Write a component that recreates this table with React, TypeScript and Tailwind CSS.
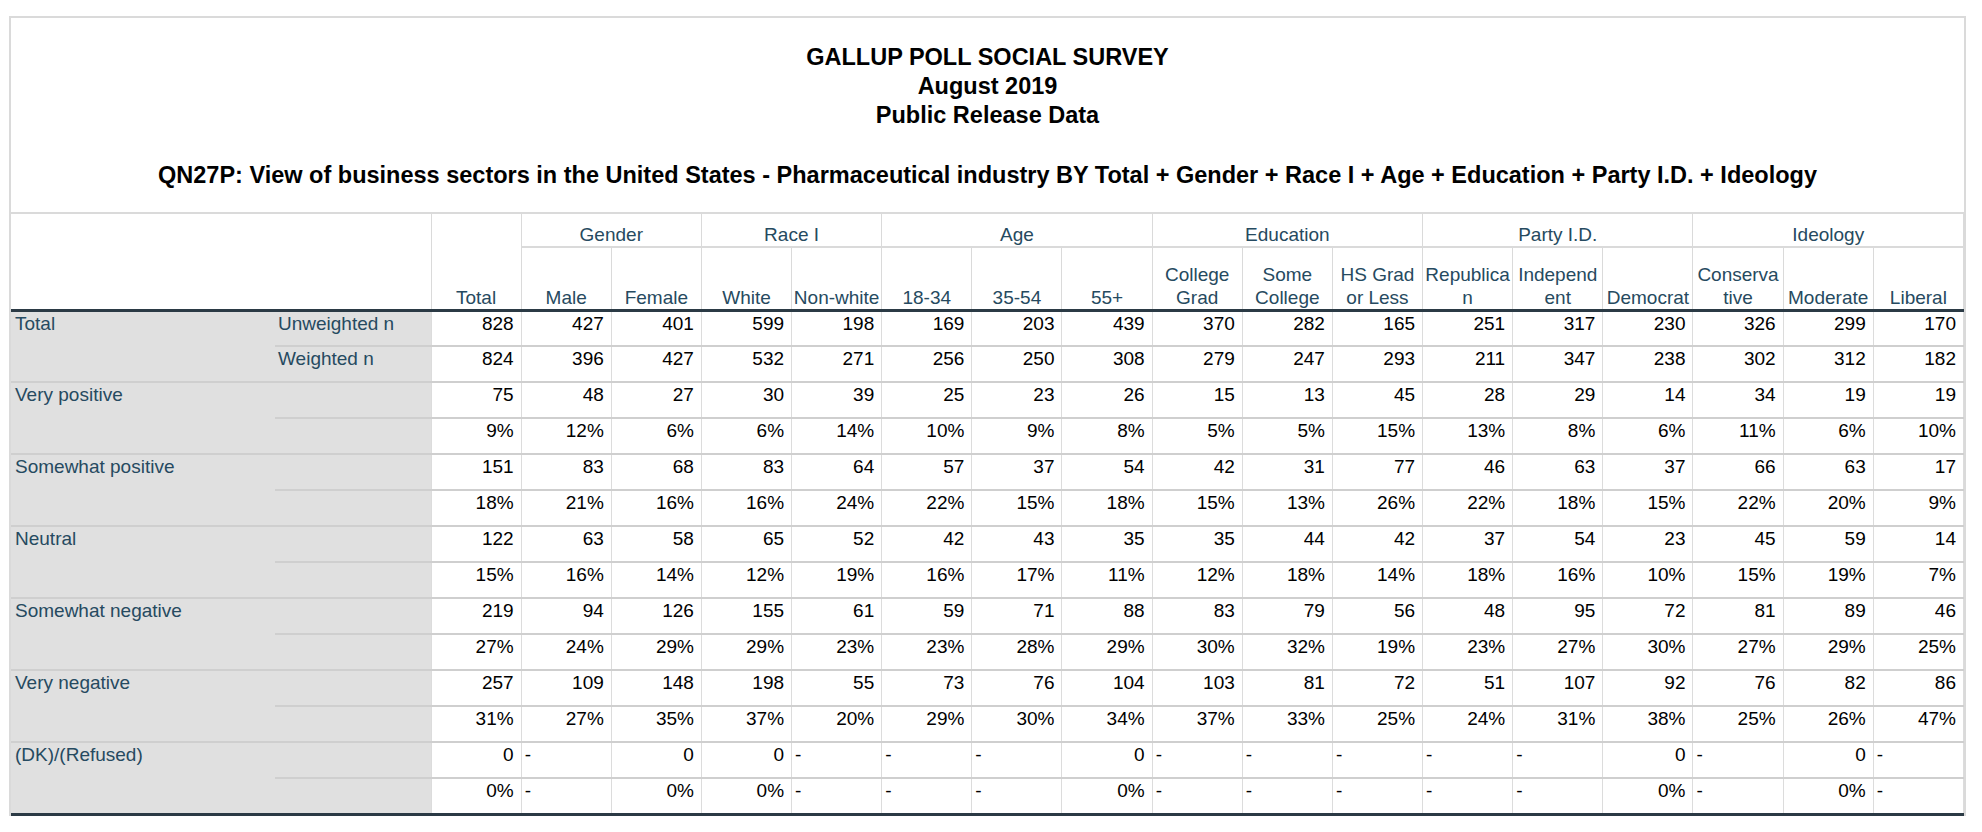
import React from 'react';

const groups = [
  { name: 'Gender', cols: ['Male', 'Female'] },
  { name: 'Race I', cols: ['White', 'Non-white'] },
  { name: 'Age', cols: ['18-34', '35-54', '55+'] },
  { name: 'Education', cols: ['College\nGrad', 'Some\nCollege', 'HS Grad\nor Less'] },
  { name: 'Party I.D.', cols: ['Republica\nn', 'Independ\nent', 'Democrat'] },
  { name: 'Ideology', cols: ['Conserva\ntive', 'Moderate', 'Liberal'] },
];

const rows = [
  {
    label: 'Total',
    sub: ['Unweighted n', 'Weighted n'],
    data: [
      '828 427 401 599 198 169 203 439 370 282 165 251 317 230 326 299 170',
      '824 396 427 532 271 256 250 308 279 247 293 211 347 238 302 312 182',
    ],
  },
  {
    label: 'Very positive',
    sub: ['', ''],
    data: [
      '75 48 27 30 39 25 23 26 15 13 45 28 29 14 34 19 19',
      '9% 12% 6% 6% 14% 10% 9% 8% 5% 5% 15% 13% 8% 6% 11% 6% 10%',
    ],
  },
  {
    label: 'Somewhat positive',
    sub: ['', ''],
    data: [
      '151 83 68 83 64 57 37 54 42 31 77 46 63 37 66 63 17',
      '18% 21% 16% 16% 24% 22% 15% 18% 15% 13% 26% 22% 18% 15% 22% 20% 9%',
    ],
  },
  {
    label: 'Neutral',
    sub: ['', ''],
    data: [
      '122 63 58 65 52 42 43 35 35 44 42 37 54 23 45 59 14',
      '15% 16% 14% 12% 19% 16% 17% 11% 12% 18% 14% 18% 16% 10% 15% 19% 7%',
    ],
  },
  {
    label: 'Somewhat negative',
    sub: ['', ''],
    data: [
      '219 94 126 155 61 59 71 88 83 79 56 48 95 72 81 89 46',
      '27% 24% 29% 29% 23% 23% 28% 29% 30% 32% 19% 23% 27% 30% 27% 29% 25%',
    ],
  },
  {
    label: 'Very negative',
    sub: ['', ''],
    data: [
      '257 109 148 198 55 73 76 104 103 81 72 51 107 92 76 82 86',
      '31% 27% 35% 37% 20% 29% 30% 34% 37% 33% 25% 24% 31% 38% 25% 26% 47%',
    ],
  },
  {
    label: '(DK)/(Refused)',
    sub: ['', ''],
    data: [
      '0 - 0 0 - - - 0 - - - - - 0 - 0 -',
      '0% - 0% 0% - - - 0% - - - - - 0% - 0% -',
    ],
  },
];

const Cell = ({ v }: { v: string }) => (
  <td
    className={`h-[36px] align-top pt-[1px] border-x border-[#dcdcdc] border-t-2 border-t-[#cfcfcf] ${
      v === '-' ? 'text-left pl-[3px]' : 'text-right pr-[7px]'
    }`}
  >
    {v}
  </td>
);

const App = () => {
  return (
    <div className="min-h-screen bg-white pt-[16px] pl-[9px] font-['Liberation_Sans',Arial,sans-serif]">
      <div className="w-[1957px] border-2 border-b-0 border-[#dadada]">
        {/* Title block */}
        <div className="text-center text-[23.5px] font-bold leading-[29px] text-black pt-[25px] pb-[22px]">
          <div>GALLUP POLL SOCIAL SURVEY</div>
          <div>August 2019</div>
          <div>Public Release Data</div>
          <div className="mt-[31px]">
            QN27P: View of business sectors in the United States - Pharmaceutical industry BY Total + Gender + Race I + Age + Education + Party I.D. + Ideology
          </div>
        </div>

        <table className="w-full table-fixed border-collapse text-[19px] leading-[22px]">
          <colgroup>
            <col className="w-[264px]" />
            <col className="w-[156px]" />
          </colgroup>
          <thead className="text-[#264a60]">
            <tr className="h-[34px]">
              <th colSpan={2} rowSpan={2} className="border-t-2 border-[#dadada] border-b-[3px] border-b-[#2b3a45]" />
              <th
                rowSpan={2}
                className="font-normal align-bottom pb-0 border-t-2 border-x border-[#dadada] border-b-[3px] border-b-[#2b3a45]"
              >
                Total
              </th>
              {groups.map((g) => (
                <th
                  key={g.name}
                  colSpan={g.cols.length}
                  className="font-normal align-bottom pb-0 border-t-2 border-b-2 border-x border-[#dadada]"
                >
                  {g.name}
                </th>
              ))}
            </tr>
            <tr className="h-[63px]">
              {groups.flatMap((g) =>
                g.cols.map((c) => (
                  <th
                    key={c}
                    className="font-normal align-bottom pb-0 whitespace-pre-line leading-[23px] border-x border-[#dadada] border-b-[3px] border-b-[#2b3a45]"
                  >
                    {c}
                  </th>
                ))
              )}
            </tr>
          </thead>
          <tbody className="text-black">
            {rows.map((r) =>
              r.data.map((line, i) => (
                <tr key={r.label + i}>
                  {i === 0 && (
                    <td
                      rowSpan={2}
                      className="align-top pt-[1px] pl-[4px] bg-[#e0e0e0] text-[#264a60] border-t-2 border-t-[#cfcfcf]"
                    >
                      {r.label}
                    </td>
                  )}
                  <td className="h-[36px] align-top pt-[1px] pl-[3px] bg-[#e0e0e0] text-[#264a60] border-t-2 border-t-[#cfcfcf]">
                    {r.sub[i]}
                  </td>
                  {line.split(' ').map((v, j) => (
                    <Cell key={j} v={v} />
                  ))}
                </tr>
              ))
            )}
            <tr>
              <td colSpan={19} className="h-0 p-0 border-t-[3px] border-t-[#2b3a45]" />
            </tr>
          </tbody>
        </table>
      </div>
    </div>
  );
};

export default App;
